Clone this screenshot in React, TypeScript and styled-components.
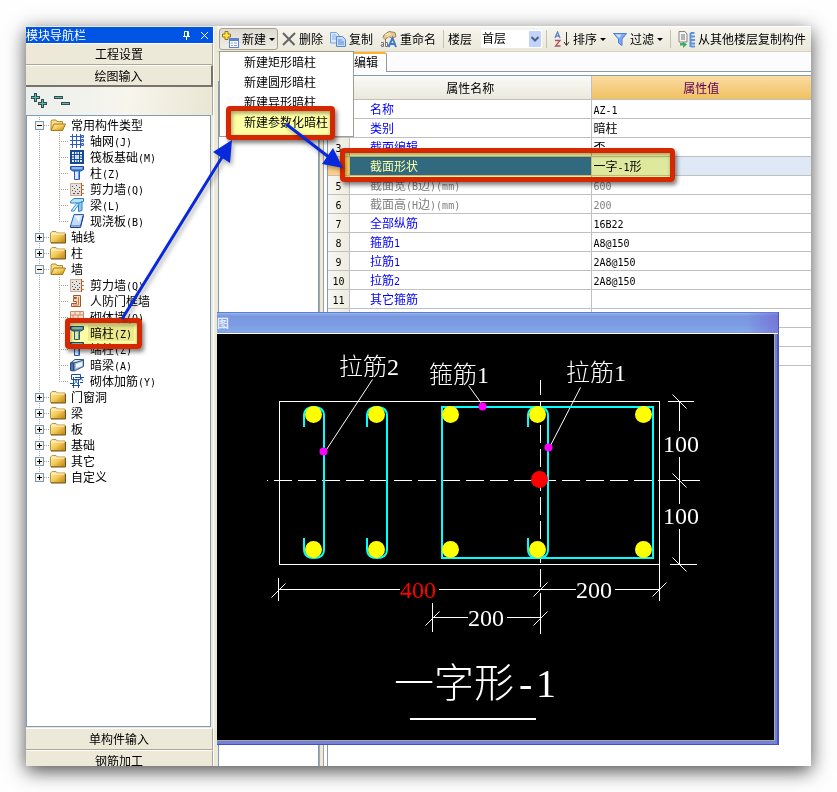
import React from 'react';
import styled, { createGlobalStyle, css } from 'styled-components';

const GlobalStyle = createGlobalStyle`
  *, *::before, *::after { box-sizing: border-box; }
  body {
    margin: 0;
    background: #fefefe;
    color: #000;
    font: 12px/16px "Noto Sans CJK SC", sans-serif;
  }
  button, select { font: inherit; color: inherit; margin: 0; }
  button { padding: 0; border: 0; background: none; cursor: pointer; }
  svg { display: block; flex: none; }
`;

/* ---------- text ---------- */

const Latin = styled.span`
  font-family: "DejaVu Sans Mono", monospace;
  font-size: 10px;
  line-height: 8px;
`;

/** Sets Latin runs in a half-width monospace face beside full-width characters. */
const Mixed = ({ children }: { children: string }) => (
  <>
    {children.split(/([\x20-\x7e]+)/).map((part, i) => (i % 2 ? <Latin key={i}>{part}</Latin> : part))}
  </>
);

/* ---------- window ---------- */

const Page = styled.div`
  height: 100vh;
  min-height: 560px;
  padding: 26px;
`;

const Shell = styled.div`
  position: relative;
  height: 100%;
  box-shadow: 0 5px 18px rgba(0, 0, 0, 0.7);
`;

const Frame = styled.div`
  display: flex;
  height: 100%;
  overflow: hidden;
  background: #ece9d8;
`;

/* ---------- navigation ---------- */

const NavPane = styled.nav`
  display: flex;
  flex-direction: column;
  flex: none;
  width: 187px;
  padding-top: 1px;
`;

const NavTitle = styled.header`
  display: flex;
  align-items: center;
  flex: none;
  height: 16px;
  padding-right: 4px;
  gap: 9px;
  background: #0054e3;
  color: #fff;
  h2 { flex: 1; margin: 0; font-size: 12px; font-weight: 400; line-height: 16px; }
`;

const NavSection = styled.button<{ $open?: boolean }>`
  flex: none;
  height: 22px;
  border-top: 1px solid #fff;
  border-right: 1px solid #aca899;
  border-bottom: 1px solid #aca899;
  background: #ece9d8;
  line-height: 20px;
  ${p => p.$open && css`
    border-right: 2px solid #77756b;
    border-bottom: 2px solid #77756b;
  `}
`;

const NavTools = styled.div`
  display: flex;
  align-items: center;
  flex: none;
  height: 28px;
  padding-left: 5px;
  gap: 6px;
  border-right: 1px solid #aca899;
  background: linear-gradient(100deg, #ecefee, #f7f5ec 55%, #e9e6d3);
`;

const TreePane = styled.div`
  flex: 1;
  min-height: 0;
  overflow: hidden;
  margin-right: 2px;
  padding: 1px 0 0 8px;
  border: 1px solid #7f9db9;
  background: #fff;
`;

const NavFooter = styled.div`
  display: flex;
  flex-direction: column;
  flex: none;
  height: 39px;
  overflow: hidden;
  padding-top: 1px;
`;

const Divider = styled.div`
  flex: none;
  width: 4px;
  border-left: 1px solid #fff;
  background: #ece9d8;
`;

/* ---------- tree ---------- */

const dotsDown = 'repeating-linear-gradient(#a8a594 0 1px, transparent 1px 2px)';
const dotsAcross = 'repeating-linear-gradient(90deg, #a8a594 0 1px, transparent 1px 2px)';

const TreeList = styled.ul`
  margin: 0;
  padding: 0;
  list-style: none;
`;

const Branch = styled.li<{ $last?: boolean }>`
  background: ${dotsDown} 4px 0 / 1px ${p => (p.$last ? '8px' : '100%')} no-repeat;
`;

const Leaf = styled.li<{ $last: boolean }>`
  display: flex;
  align-items: center;
  height: 16px;
  margin-left: 24px;
  padding-left: 11px;
  gap: 4px;
  background:
    ${dotsDown} 0 0 / 1px ${p => (p.$last ? '8px' : '100%')} no-repeat,
    ${dotsAcross} 0 8px / 10px 1px no-repeat;
`;

const BranchRow = styled.div`
  display: flex;
  align-items: center;
  height: 16px;
  background: ${dotsAcross} 9px 8px / 6px 1px no-repeat;
`;

const Expander = styled.button`
  flex: none;
  width: 9px;
  height: 9px;
  margin-right: 6px;
`;

const Node = styled.button<{ $selected?: boolean }>`
  height: 16px;
  padding: 0 2px;
  white-space: nowrap;
  line-height: 16px;
  background: ${p => (p.$selected ? '#ece9d8' : 'transparent')};
`;

const BranchNode = styled(Node)`
  margin-left: 3px;
`;

/* ---------- main ---------- */

const Main = styled.main`
  display: flex;
  flex-direction: column;
  flex: 1;
  min-width: 0;
`;

const Toolbar = styled.div`
  display: flex;
  align-items: center;
  flex: none;
  height: 26px;
  padding-left: 2px;
  gap: 1px;
  border-top: 1px solid #fff;
  border-bottom: 1px solid #d8d2bd;
  background: linear-gradient(#f6f5ef, #ebe8da);
  white-space: nowrap;
`;

const Tool = styled.button<{ $active?: boolean }>`
  display: flex;
  align-items: center;
  flex: none;
  height: 22px;
  padding: 0 2px;
  gap: 3px;
  border: 1px solid transparent;
  border-radius: 3px;
  ${p => p.$active && css`
    border-color: #a5a193;
    background: linear-gradient(#dedcd2, #efede4);
  `}
`;

const Caret = styled.span`
  border: 3px solid transparent;
  border-top-color: #000;
  border-bottom: 0;
`;

const Rule = styled.span`
  flex: none;
  width: 1px;
  height: 18px;
  margin: 0 3px;
  background: #c5c2b0;
`;

const FloorLabel = styled.label`
  display: flex;
  align-items: center;
  flex: none;
  gap: 9px;
`;

const Combo = styled.span`
  display: grid;
  grid-template-columns: 1fr 12px;
  width: 61px;
  height: 18px;
  padding: 1px;
  background: #fff;
  > * { grid-row: 1; }
`;

const FloorSelect = styled.select`
  grid-column: 1 / 3;
  width: 100%;
  height: 16px;
  padding: 0 0 2px;
  border: 0;
  background: transparent;
  appearance: none;
  line-height: 14px;
`;

const ComboArrow = styled.svg`
  grid-column: 2;
  pointer-events: none;
`;

const Work = styled.div`
  display: flex;
  flex: 1;
  min-height: 0;
`;

const ListPane = styled.section`
  flex: none;
  width: 101px;
  margin: 29px 0 0 1px;
  border: 1px solid #7f9db9;
  border-bottom: 0;
  background: #fff;
`;

const Splitter = styled.div`
  flex: none;
  width: 8px;
  border: solid;
  border-width: 0 3px 0 1px;
  border-color: #fff #fdfdfd #fff #aca899;
  background: linear-gradient(90deg, #ece9d8 3px, #a3a19a 3px);
`;

const PropertyPane = styled.section`
  display: flex;
  flex-direction: column;
  flex: 1;
  min-width: 0;
  border-left: 1px solid #7f9db9;
  background: #fff;
`;

const TabStrip = styled.div`
  display: flex;
  flex: none;
  height: 24px;
  border-bottom: 1px solid #7f9db9;
  background: linear-gradient(transparent 19px, #919b9c 19px 20px, #fff 20px), #fcfcfe;
`;

const Tab = styled.button`
  height: 20px;
  padding: 0 8px 2px 2px;
  border-top: 2px solid #ffb02e;
  border-right: 1px solid #919b9c;
  border-radius: 0 3px 0 0;
  background: #fff;
`;

const Grid = styled.table`
  width: 100%;
  table-layout: fixed;
  border-collapse: separate;
  border-spacing: 0;
  col:nth-child(1) { width: 22px; }
  col:nth-child(2) { width: 50%; }
  th, td {
    height: 19px;
    padding: 0 0 1px 2px;
    border-right: 1px solid #c0c0c0;
    border-bottom: 1px solid #c0c0c0;
    font-weight: 400;
    line-height: 16px;
    text-align: left;
    white-space: nowrap;
    overflow: hidden;
  }
  th:last-child, td:last-child { border-right: 0; }
`;

const HeadCell = styled.th<{ $hot?: boolean }>`
  && {
    height: 24px;
    padding: 0;
    text-align: center;
    color: ${p => (p.$hot ? '#5a005a' : '#000')};
    background: ${p => (p.$hot ? 'linear-gradient(#fbdca2, #f0c062)' : 'linear-gradient(#fafaf7, #ebe9dc)')};
  }
`;

const IndexCell = styled.th<{ $on: boolean }>`
  && {
    padding: 0;
    text-align: center;
    background: ${p => (p.$on ? '#ffcf87' : 'linear-gradient(90deg, #f8f7f1, #eeecdf)')};
  }
`;

const NameCell = styled.td<{ $on: boolean; $off?: boolean }>`
  && {
    padding-left: 20px;
    color: ${p => (p.$on ? '#fff' : p.$off ? '#808080' : '#00f')};
    background: ${p => (p.$on ? '#316ac5' : '#fff')};
  }
`;

const ValueCell = styled.td<{ $on: boolean; $off?: boolean }>`
  color: ${p => (p.$off ? '#808080' : '#000')};
  background: ${p => (p.$on ? '#dfe9f6' : '#fff')};
`;

/* ---------- floating parts ---------- */

const Menu = styled.div`
  position: absolute;
  left: 193px;
  top: 25px;
  display: flex;
  flex-direction: column;
  width: 135px;
  padding: 0 0 4px;
  border: 1px solid #9d9d93;
  background: #fff;
`;

const MenuItem = styled.button`
  height: 20px;
  padding-left: 24px;
  line-height: 20px;
  text-align: left;
  white-space: nowrap;
`;

const Dialog = styled.section`
  position: absolute;
  left: 191px;
  top: 286px;
  width: 562px;
  padding: 0 4px 3px 0;
  background: linear-gradient(90deg, #6f82dc calc(100% - 2px), #4f55c0 calc(100% - 2px));
  border-bottom: 1px solid #4b4fb8;
`;

const DialogTitle = styled.h2`
  height: 22px;
  margin: 0 -3px 0 0;
  border-top: 1px solid #5f80cf;
  border-bottom: 1px solid #fff;
  color: #e4ecff;
  font-size: 12px;
  line-height: 20px;
  background:
    linear-gradient(90deg, transparent calc(100% - 32px), rgba(114, 96, 210, 0.6)),
    linear-gradient(#98b5f0, #7997df 3px, #7c9ce3 12px, #84a9ea 19px, #7592dd);
`;

const Drawing = styled.svg`
  width: 100%;
  height: auto;
  background: #000;
  border-right: 1px solid #aca899;
  border-bottom: 1px solid #aca899;
  font-family: "Liberation Serif", "Noto Sans CJK SC", serif;
  font-size: 24px;
  font-weight: 300;
`;

const marks = {
  menu: css`left: 200px; top: 80px; width: 109px; height: 34px;`,
  row: css`left: 314px; top: 122px; width: 335px; height: 34px;`,
  node: css`left: 39px; top: 292px; width: 77px; height: 31px;`,
};

const Mark = styled.div<{ $on: keyof typeof marks }>`
  position: absolute;
  ${p => marks[p.$on]}
  border: 5px solid #d62800;
  border-radius: 4px;
  box-shadow: 2px 3px 4px rgba(0, 0, 0, 0.5), inset 1px 2px 4px rgba(0, 0, 0, 0.4);
  pointer-events: none;
  &::before {
    content: '';
    position: absolute;
    inset: 0;
    background: #ffffa3;
    mix-blend-mode: multiply;
  }
`;

const Arrows = styled.svg`
  position: absolute;
  left: 0;
  top: 0;
  pointer-events: none;
  filter: drop-shadow(2px 3px 2px rgba(0, 0, 0, 0.3));
`;

/* ---------- icons ---------- */

const Folder = ({ open }: { open: boolean }) => (
  <svg width="16" height="14" viewBox="0 0 16 14" aria-hidden="true">
    <defs>
      <linearGradient id="fold" x1="0" y1="0" x2="1" y2="1">
        <stop offset="0" stopColor="#fff2b8" /><stop offset=".5" stopColor="#f3cb57" /><stop offset="1" stopColor="#c07f10" />
      </linearGradient>
    </defs>
    {open ? (
      <>
        <path d="M1 12V3l1-1h4l1 1.5h5.500V6" fill="#f6dc86" stroke="#b08a35" />
        <path d="M1 12.500L4 6h11.500L12.500 12.500z" fill="url(#fold)" stroke="#a87818" />
      </>
    ) : (
      <>
        <path d="M.5 12.500V3L2 1.500h4L7.500 3H15v9.500z" fill="url(#fold)" stroke="#b8954c" />
        <path d="M1 4h13.500" stroke="#fff6cf" />
        <path d="M1 13h14.500V4" stroke="#6f5212" fill="none" />
      </>
    )}
  </svg>
);

type IconName = 'grid' | 'raft' | 'column' | 'wall' | 'beam' | 'slab' | 'door' | 'brick' | 'box' | 'rebar';

const shapes: Record<IconName, React.ReactNode> = {
  grid: (
    <g stroke="#2a5cb8" fill="none">
      <path d="M2.500 0v14M6.500 0v14M10.500 0v14M0 2.500h11M0 6.500h11M0 10.500h11" />
      <path d="M11.500 1.500h2v2h-2zM11.500 5.500h2v2h-2zM11.500 9.500h2v2h-2z" fill="#dce8fa" />
    </g>
  ),
  raft: (
    <>
      <path d="M0 0h14v14H0z" fill="#164a94" />
      <path d="M2 2h10v10H2z" fill="#e2efff" />
      <path d="M4.500 1v12M9.500 1v12M1 4.500h12M1 9.500h12M7 2v2M7 10v2M2 7h2M10 7h2" stroke="#164a94" />
      <path d="M5.500 5.500h3v3h-3z" fill="#b9dcff" />
    </>
  ),
  column: (
    <>
      <path d="M.5 .5h13v3l-2.500 1.500h-8L.5 3.500z" fill="#4d86df" stroke="#1c4a9e" />
      <path d="M2 2h10" stroke="#cfe3ff" />
      <path d="M4.500 5h5v8.500h-5z" fill="#dceaff" stroke="#2a57b0" />
      <path d="M8.500 5.500v8" stroke="#6e9ff0" />
    </>
  ),
  wall: (
    <>
      <path d="M.5 1.500h11v12H.5z" fill="#e4e2de" stroke="#d8a890" />
      <path d="M2 4.500h1M6 3.500h1M9 5.500h1M4 6.500h1M7 7.500h1M2 8.500h1M5 9.500h1M9 9.500h1M3 11.500h2M7 11.500h2" stroke="#4c4c4c" />
      <path d="M11.500 1v13" stroke="#a3552a" />
      <path d="M11 3.500h3M11 7.500h3M11 11.500h3" stroke="#e46a1f" />
    </>
  ),
  beam: (
    <>
      <path d="M.5 3.500L4 .5h9.500v3L10 5H.5z" fill="#b7e2fb" stroke="#2d7fc0" />
      <path d="M8.500 5.500l3.500-2v9l-3.500 1z" fill="#8fcbf0" stroke="#2d7fc0" />
      <path d="M1 13l6-8 2 1-5 7z" fill="#d9f1ff" stroke="#2d8fcc" />
    </>
  ),
  slab: (
    <>
      <path d="M4 .5h9.500L10.500 12H.5z" fill="#c4dcfb" stroke="#2d61b5" />
      <path d="M.5 12v1.500h10l3-12" fill="none" stroke="#163f8a" />
      <path d="M5 2h6L9 8z" fill="#eef6ff" />
    </>
  ),
  door: (
    <>
      <path d="M3.500 1.500h7v11h-9v-3h5v-2h-3v-3h3v-1h-3z" fill="#f7dcc2" stroke="#a8522a" />
      <path d="M8.500 3v8M3 11h5" stroke="#c87a48" />
    </>
  ),
  brick: (
    <path d="M.5 1.500h13v11H.5zM0 5h14M0 9h14M5 1v4M10 1v4M3 5v4M8 5v4M5 9v4M10 9v4" fill="#f6e0d2" stroke="#d08a60" />
  ),
  box: (
    <>
      <path d="M.5 5L5 1.500h8.500L10 4.500z" fill="#dbe9fb" stroke="#34507c" />
      <path d="M.5 5v7.500L3.500 13V5z" fill="#4b78b8" stroke="#2a4878" />
      <path d="M4 5l9.500-3v6.500L4 13z" fill="#a4c3e8" stroke="#34507c" />
      <path d="M6 6l6-2v4l-6 2z" fill="#eef5fd" />
    </>
  ),
  rebar: (
    <g fill="none" stroke="#1d4c9f">
      <path d="M1.500 .5h9v5h-9zM0 9.500h3M3.500 3v11M8.500 5v9M5 3.500h9M2 11.500h8M13 8.500h-3" />
      <path d="M4 10l4-5M11 4l2 3M5 6l3 4" stroke="#3a6cc0" />
    </g>
  ),
};

const NodeIcon = ({ name }: { name: IconName }) => (
  <svg width="14" height="14" viewBox="0 0 14 14" aria-hidden="true">{shapes[name]}</svg>
);

const PlusMinus = ({ open }: { open: boolean }) => (
  <svg width="9" height="9" viewBox="0 0 9 9" shapeRendering="crispEdges" aria-hidden="true">
    <rect width="9" height="9" fill="#7898b5" />
    <rect x="1" y="1" width="7" height="7" fill="#f5f3ec" />
    <path d={open ? 'M2 4h5v1H2z' : 'M2 4h5v1H2zM4 2h1v5H4z'} />
  </svg>
);

const PinIcon = () => (
  <svg width="9" height="9" viewBox="0 0 9 9" fill="none" stroke="#fff" aria-hidden="true">
    <path d="M2.500 5V.5h4V5M5.500 0v5M1 5.500h7M4.500 5.500V9" />
  </svg>
);
const CloseIcon = () => (
  <svg width="9" height="9" viewBox="0 0 9 9" stroke="#fff" aria-hidden="true"><path d="M1 1l7 7M8 1L1 8" /></svg>
);

const ExpandAllIcon = () => (
  <svg width="17" height="16" viewBox="0 0 17 16" shapeRendering="crispEdges" aria-hidden="true">
    <path d="M4.500 0v9M0 4.500h9M11.500 6v9M7 10.500h9" stroke="#3c4a4e" strokeWidth="3" />
    <path d="M4.500 1v7M1 4.500h7M11.500 7v7M8 10.500h7" stroke="#4cc0b0" />
  </svg>
);
const CollapseAllIcon = () => (
  <svg width="17" height="16" viewBox="0 0 17 16" shapeRendering="crispEdges" aria-hidden="true">
    <path d="M0 4.500h9M7 10.500h9" stroke="#3c4a4e" strokeWidth="3" />
    <path d="M1 4.500h7M8 10.500h7" stroke="#4cc0b0" />
  </svg>
);

const NewIcon = () => (
  <svg width="17" height="17" viewBox="0 0 17 17" aria-hidden="true">
    <path d="M3 .5h3V3h2.500v3H6v2.500H3V6H.5V3H3z" fill="#ffe04a" stroke="#9a7410" />
    <rect x="7.500" y="7.500" width="9" height="9" fill="#fff" stroke="#5a83cc" />
    <path d="M7 9h10" stroke="#5a83cc" strokeWidth="2" />
    <path d="M9 12h2M12 12h3M9 14.500h2M12 14.500h3" stroke="#7da3e6" />
  </svg>
);
const DeleteIcon = () => (
  <svg width="14" height="14" viewBox="0 0 14 14" stroke="#666" strokeWidth="2" aria-hidden="true">
    <path d="M1 1l11.500 12M13 1L1 13" />
  </svg>
);
const CopyIcon = () => (
  <svg width="16" height="15" viewBox="0 0 16 15" aria-hidden="true">
    <path d="M.5 .5h6L9 3v8H.5z" fill="#dce9fb" stroke="#7aa2dc" />
    <path d="M2 3h4M2 5h5M2 7h4" stroke="#8db2e8" />
    <path d="M6.500 4.500h6l3 3v7h-9z" fill="#c5dbf8" stroke="#5c8ad0" />
    <path d="M8 8h4M8 10h6M8 12h6" stroke="#5c8ad0" />
  </svg>
);
const RenameIcon = () => (
  <svg width="17" height="17" viewBox="0 0 17 17" aria-hidden="true">
    <path d="M4 4l5-3.500 6 1 1 4-4 2-3-2-4 3-2-2z" fill="#e8c98d" stroke="#9a8458" />
    <path d="M5 4l5-2M7 6l4-3" stroke="#fff3cf" />
    <path d="M1 11.500h2.500v4H1.500L1 14l2.500-.5M5.500 8v7.500h2v-4h-2" fill="none" stroke="#777" />
    <path d="M8.500 16L12.500 7l3.500 9M10 13h5" fill="none" stroke="#3f78cf" strokeWidth="2" />
  </svg>
);
const SortIcon = () => (
  <svg width="16" height="16" viewBox="0 0 16 16" fill="none" aria-hidden="true">
    <path d="M1 7L3.500 1 6 7M2 5h3" stroke="#5a83cc" strokeWidth="1.300" />
    <path d="M1 9.500h5L1.500 15H6.500" stroke="#b05560" strokeWidth="1.300" />
    <path d="M12.500 1v13M10 11l2.500 3.500L15 11" stroke="#333" />
  </svg>
);
const FilterIcon = () => (
  <svg width="14" height="14" viewBox="0 0 14 14" aria-hidden="true">
    <path d="M.5 1.500h13L9 7v6.500L5.500 11V7z" fill="#7eaaf0" stroke="#4d7fd4" />
    <path d="M2.500 2.500h6L6 6z" fill="#d3e4ff" />
  </svg>
);
const CopyFloorIcon = () => (
  <svg width="17" height="17" viewBox="0 0 17 17" aria-hidden="true">
    <path d="M1 .5h6L9 3v8H1z" fill="#f4f4f2" stroke="#858585" />
    <path d="M3 4h4M3 6h4M3 8h4" stroke="#777" />
    <path d="M12.500 2v14M16.500 2h-4M17 5.500h-4M17 9h-4M17 12.500h-4M17 15.500h-4" stroke="#5c91dc" strokeWidth="2" />
    <path d="M2 12v2.500h3V17l4-3.500L5 10.500V12z" fill="#3fae62" />
  </svg>
);

/* ---------- data ---------- */

interface TreeGroup {
  label: string;
  children?: { label: string; icon: IconName; selected?: boolean }[];
}

const tree: TreeGroup[] = [
  {
    label: '常用构件类型',
    children: [
      { label: '轴网(J)', icon: 'grid' },
      { label: '筏板基础(M)', icon: 'raft' },
      { label: '柱(Z)', icon: 'column' },
      { label: '剪力墙(Q)', icon: 'wall' },
      { label: '梁(L)', icon: 'beam' },
      { label: '现浇板(B)', icon: 'slab' },
    ],
  },
  { label: '轴线' },
  { label: '柱' },
  {
    label: '墙',
    children: [
      { label: '剪力墙(Q)', icon: 'wall' },
      { label: '人防门框墙', icon: 'door' },
      { label: '砌体墙(Q)', icon: 'brick' },
      { label: '暗柱(Z)', icon: 'column', selected: true },
      { label: '端柱(Z)', icon: 'column' },
      { label: '暗梁(A)', icon: 'box' },
      { label: '砌体加筋(Y)', icon: 'rebar' },
    ],
  },
  { label: '门窗洞' },
  { label: '梁' },
  { label: '板' },
  { label: '基础' },
  { label: '其它' },
  { label: '自定义' },
];

const properties: { no: string; name: string; value: string; off?: boolean; on?: boolean }[] = [
  { no: '1', name: '名称', value: 'AZ-1' },
  { no: '2', name: '类别', value: '暗柱' },
  { no: '3', name: '截面编辑', value: '否' },
  { no: '', name: '截面形状', value: '一字-1形', on: true },
  { no: '5', name: '截面宽(B边)(mm)', value: '600', off: true },
  { no: '6', name: '截面高(H边)(mm)', value: '200', off: true },
  { no: '7', name: '全部纵筋', value: '16B22' },
  { no: '8', name: '箍筋1', value: 'A8@150' },
  { no: '9', name: '拉筋1', value: '2A8@150' },
  { no: '10', name: '拉筋2', value: '2A8@150' },
  { no: '11', name: '其它箍筋', value: '' },
  { no: '', name: '', value: '' },
  { no: '', name: '', value: '' },
  { no: '', name: '', value: '' },
];

const menuItems = ['新建矩形暗柱', '新建圆形暗柱', '新建异形暗柱', '新建参数化暗柱'];

/* ---------- section drawing ---------- */

const tie = (x: number) =>
  `M${x} 427V416Q${x} 407 ${x + 10} 407Q${x + 20} 407 ${x + 20} 416V549Q${x + 20} 558 ${x + 10} 558Q${x} 558 ${x} 549V538`;

const SectionDrawing = () => (
  <Drawing viewBox="217 334 557 406" role="img" aria-label="一字形-1">
    <g transform="translate(.5 .5)" fill="none" stroke="#fff">
      <g shapeRendering="crispEdges">
        <path d="M279 401H659V564H279z" />
        <path d="M273 480H699" strokeDasharray="18 6" />
        <path d="M266 480h1" />
        <path d="M540 379V586" strokeDasharray="18 6" strokeDashoffset="3" />
        <path d="M540 592V633M659 564V600M278 577V600M432 602V631" />
        <path d="M667 401H693M669 564H696M679 401V430M679 456V503M679 528V564" />
        <path d="M278 589H399M438 589H575M614 589H659M432 617H467M506 617H540" />
      </g>
      <path d="M372 379L326 449M468 385L481 403M580 387L550 445" />
      <path d="M672 394l14 14M672 473l14 14M672 557l14 14M271 597l14-14M533 596l14-14M652 596l14-14M425 625l14-14M533 625l14-14" />
    </g>
    <g fill="none" stroke="#0ff" strokeWidth="2">
      <path d="M442 407H653V558H442z" />
      {[304, 367, 528].map(x => <path key={x} d={tie(x)} />)}
    </g>
    <path d="M410 719H536" stroke="#fff" strokeWidth="2" />
    <g fill="#ff0">
      {[313, 376, 450, 537, 643].map(x => (
        <React.Fragment key={x}>
          <circle cx={x + 0.5} cy="414.500" r="8.500" />
          <circle cx={x + 0.5} cy="549.500" r="8.500" />
        </React.Fragment>
      ))}
    </g>
    <g fill="#f0f">
      <circle cx="323.500" cy="451.500" r="4" />
      <circle cx="482.500" cy="406.500" r="4" />
      <circle cx="548.500" cy="447.500" r="4" />
    </g>
    <circle cx="539.500" cy="479.500" r="8.500" fill="#f00" />
    <g fill="#fff">
      <text x="339" y="375">拉筋2</text>
      <text x="429" y="383">箍筋1</text>
      <text x="566" y="381">拉筋1</text>
      <text x="663" y="452">100</text>
      <text x="663" y="524">100</text>
      <text x="400" y="598" fill="#f00">400</text>
      <text x="576" y="598">200</text>
      <text x="468" y="626">200</text>
      <text y="697" fontSize="40">
        <tspan x="394">一字形</tspan>
        <tspan x="519">-</tspan>
        <tspan x="536">1</tspan>
      </text>
    </g>
  </Drawing>
);

/* ---------- app ---------- */

export default function App() {
  return (
    <Page>
      <GlobalStyle />
      <Shell>
        <Frame>
          <NavPane>
            <NavTitle>
              <h2>模块导航栏</h2>
              <button aria-label="固定"><PinIcon /></button>
              <button aria-label="关闭"><CloseIcon /></button>
            </NavTitle>
            <NavSection>工程设置</NavSection>
            <NavSection $open>绘图输入</NavSection>
            <NavTools>
              <button aria-label="全部展开"><ExpandAllIcon /></button>
              <button aria-label="全部折叠"><CollapseAllIcon /></button>
            </NavTools>
            <TreePane>
              <TreeList>
                {tree.map((group, g) => (
                  <Branch key={g} $last={g === tree.length - 1}>
                    <BranchRow>
                      <Expander aria-label={group.label} aria-expanded={!!group.children}>
                        <PlusMinus open={!!group.children} />
                      </Expander>
                      <Folder open={!!group.children} />
                      <BranchNode>{group.label}</BranchNode>
                    </BranchRow>
                    {group.children && (
                      <TreeList>
                        {group.children.map((leaf, i) => (
                          <Leaf key={i} $last={i === group.children!.length - 1}>
                            <NodeIcon name={leaf.icon} />
                            <Node $selected={leaf.selected}><Mixed>{leaf.label}</Mixed></Node>
                          </Leaf>
                        ))}
                      </TreeList>
                    )}
                  </Branch>
                ))}
              </TreeList>
            </TreePane>
            <NavFooter>
              <NavSection>单构件输入</NavSection>
              <NavSection>钢筋加工</NavSection>
            </NavFooter>
          </NavPane>
          <Divider />
          <Main>
            <Toolbar>
              <Tool $active aria-haspopup="menu" aria-expanded="true"><NewIcon />新建<Caret /></Tool>
              <Tool><DeleteIcon />删除</Tool>
              <Tool><CopyIcon />复制</Tool>
              <Tool><RenameIcon />重命名</Tool>
              <Rule />
              <FloorLabel>
                楼层
                <Combo>
                  <FloorSelect defaultValue="首层"><option>首层</option></FloorSelect>
                  <ComboArrow width="12" height="16" viewBox="0 0 12 16" aria-hidden="true">
                    <rect width="12" height="16" rx="1" fill="#c1d3fb" />
                    <path d="M2.500 6L6 9.500 9.500 6" fill="none" stroke="#4d6185" strokeWidth="2" />
                  </ComboArrow>
                </Combo>
              </FloorLabel>
              <Rule />
              <Tool><SortIcon />排序<Caret /></Tool>
              <Tool><FilterIcon />过滤<Caret /></Tool>
              <Rule />
              <Tool><CopyFloorIcon />从其他楼层复制构件</Tool>
            </Toolbar>
            <Work>
              <ListPane />
              <Splitter />
              <PropertyPane>
                <TabStrip><Tab>属性编辑</Tab></TabStrip>
                <Grid>
                  <colgroup><col /><col /><col /></colgroup>
                  <thead>
                    <tr><HeadCell /><HeadCell>属性名称</HeadCell><HeadCell $hot>属性值</HeadCell></tr>
                  </thead>
                  <tbody>
                    {properties.map((p, i) => (
                      <tr key={i}>
                        <IndexCell scope="row" $on={!!p.on}><Mixed>{p.no}</Mixed></IndexCell>
                        <NameCell $on={!!p.on} $off={p.off}><Mixed>{p.name}</Mixed></NameCell>
                        <ValueCell $on={!!p.on} $off={p.off}><Mixed>{p.value}</Mixed></ValueCell>
                      </tr>
                    ))}
                  </tbody>
                </Grid>
              </PropertyPane>
            </Work>
          </Main>
        </Frame>
        <Menu role="menu">
          {menuItems.map(item => <MenuItem key={item} role="menuitem">{item}</MenuItem>)}
        </Menu>
        <Dialog aria-label="图">
          <DialogTitle>图</DialogTitle>
          <SectionDrawing />
        </Dialog>
        <Mark $on="menu" />
        <Mark $on="row" />
        <Mark $on="node" />
        <Arrows width="340" height="310" viewBox="26 26 340 310" fill="#0828dc" aria-hidden="true">
          <path d="M122 319L224 154M286 124L330 158" stroke="#0828dc" strokeWidth="3" />
          <path d="M232 140L213 152L230 163z" />
          <path d="M343 168L322 164L333 148z" />
        </Arrows>
      </Shell>
    </Page>
  );
}
